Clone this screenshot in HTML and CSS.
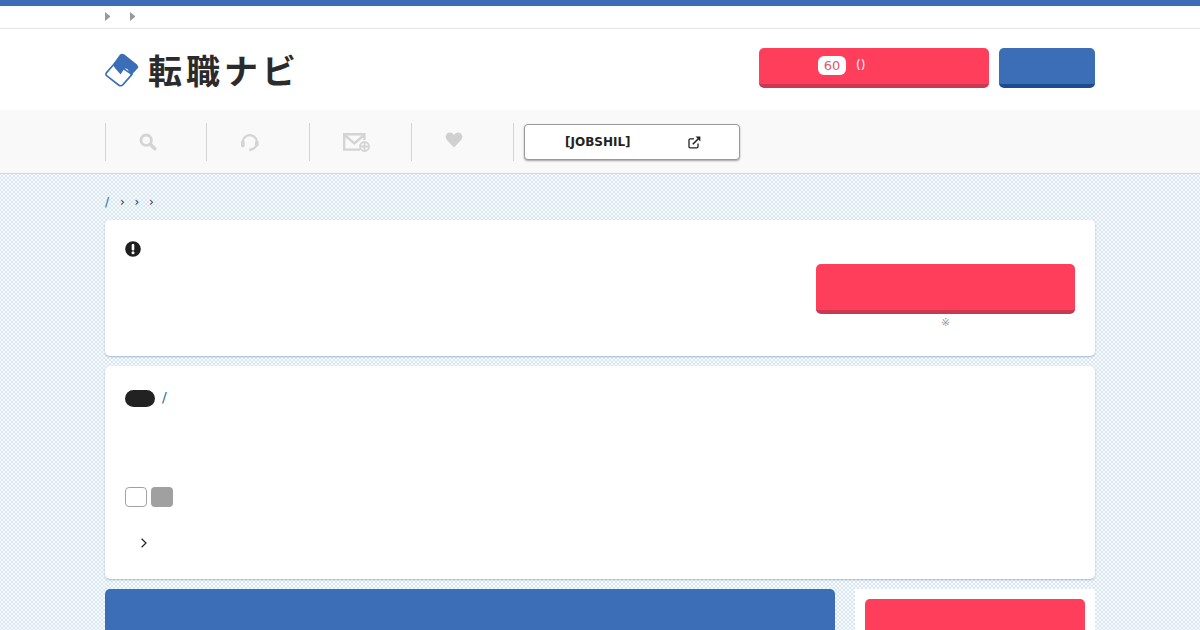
FILE: index.html
```html
<!DOCTYPE html>
<html lang="ja">
<head>
<meta charset="utf-8">
<title>転職ナビ</title>
<link rel="stylesheet" href="styles.css">
</head>
<body>
<div class="topline"></div>
<div class="subnav">
  <div class="wrap subnav-in">
    <span class="tri"></span>
    <span class="tri"></span>
  </div>
</div>
<header class="header">
  <div class="wrap header-in">
    <a class="logo">
      <svg class="logo-mark" width="34" height="34" viewBox="0 0 34 34">
        <path d="M10 10 L1.6 19.6 Q0 21.6 2.2 23.2 L13.6 32 Q16 33.6 18 31.6 L27 21.4 Z" fill="#fff" stroke="#3c6eb8" stroke-width="1.6" stroke-linejoin="round"/>
        <path d="M8.5 10.5 L15 1.5 Q17 0 19.5 1.5 L32 11.5 Q34 13.5 32.5 15.5 L26 22.6 L22.8 16.6 Q21 14.6 19 16 L15.6 21.4 L10.8 16 Q9.4 14.4 8.6 13 Z" fill="#3c6eb8"/>
      </svg>
      <span class="logo-text">転職ナビ</span>
    </a>
    <div class="header-btns">
      <a class="btn btn-red btn-reg"><span class="count">60</span><span class="paren">()</span></a>
      <a class="btn btn-blue btn-login"></a>
    </div>
  </div>
</header>
<nav class="gnav">
  <div class="wrap gnav-in">
    <a class="gitem gitem-1">
      <svg width="18" height="18" viewBox="0 0 18 18"><circle cx="7.2" cy="7.2" r="5.2" fill="none" stroke="#d4d4d4" stroke-width="2.8"/><path d="M11.2 11.2 L15.8 15.8" stroke="#d4d4d4" stroke-width="3.4" stroke-linecap="round"/></svg>
    </a>
    <a class="gitem gitem-2">
      <svg width="20" height="20" viewBox="0 0 20 20"><path d="M2.6 9.6 A7.2 7.2 0 1 1 16.6 12.6 Q15.4 16.4 11 17.6" fill="none" stroke="#d4d4d4" stroke-width="2.2"/><rect x="1" y="8.6" width="3.6" height="6.6" rx="1.4" fill="#d4d4d4"/><rect x="15" y="9" width="3.6" height="5.6" rx="1.4" fill="#d4d4d4"/><circle cx="10.4" cy="17.8" r="1.4" fill="#d4d4d4"/></svg>
    </a>
    <a class="gitem gitem-3">
      <svg width="27" height="19" viewBox="0 0 27 19"><path d="M17 16.6 H1.2 V1.2 H21.4 V7" fill="none" stroke="#d4d4d4" stroke-width="2.4"/><path d="M1.6 2 L11.4 10.4 L21 2" fill="none" stroke="#d4d4d4" stroke-width="2.4"/><circle cx="21.5" cy="13.5" r="4.5" fill="none" stroke="#d4d4d4" stroke-width="1.8"/><path d="M21.5 10 V17 M18 13.5 H25" stroke="#d4d4d4" stroke-width="1.8"/></svg>
    </a>
    <a class="gitem gitem-4">
      <svg width="18" height="16" viewBox="0 0 20 18"><path d="M10 17.4 L2 9 C-1 5.4 1.4 .6 5.4 .6 C7.4 .6 9 1.8 10 3.6 C11 1.8 12.6 .6 14.6 .6 C18.6 .6 21 5.4 18 9 Z" fill="#d0d0d0"/></svg>
    </a>
    <a class="jobshil">
      <span class="jobshil-text">[JOBSHIL]</span>
      <svg class="ext" width="13" height="13" viewBox="0 0 13 13"><path d="M10 7.4 V10.6 Q10 11.8 8.8 11.8 H2.2 Q1 11.8 1 10.6 V4 Q1 2.8 2.2 2.8 H6" fill="none" stroke="#222" stroke-width="1.3"/><path d="M4.8 8.2 L10.8 2.2" stroke="#222" stroke-width="1.6"/><path d="M7.6 .6 H12.4 V5.4 Z" fill="#222"/></svg>
    </a>
  </div>
</nav>
<main class="main">
  <div class="wrap">
    <div class="crumbs"><span class="slash">/</span><span class="chev">›</span><span class="chev">›</span><span class="chev">›</span></div>
    <section class="card card-alert">
      <svg class="alert-icon" width="16" height="16" viewBox="0 0 16 16"><circle cx="8" cy="8" r="7.8" fill="#1e1e1e"/><rect x="6.7" y="3" width="2.6" height="6.6" rx="1" fill="#fff"/><circle cx="8" cy="11.8" r="1.5" fill="#fff"/></svg>
      <div class="alert-action">
        <a class="btn btn-red btn-apply"></a>
        <span class="note">※</span>
      </div>
    </section>
    <section class="card card-job">
      <div class="job-top"><span class="pill"></span><span class="slash slash-job">/</span></div>
      <div class="tags"><span class="tag tag-line"></span><span class="tag tag-fill"></span></div>
      <div class="more">
        <svg width="8" height="10" viewBox="0 0 8 10"><path d="M1.6 .8 L6 5 L1.6 9.2" fill="none" stroke="#222" stroke-width="1.2"/></svg>
      </div>
    </section>
    <div class="bottom">
      <div class="blue-panel"></div>
      <aside class="side"><a class="btn btn-side"></a></aside>
    </div>
  </div>
</main>
</body>
</html>
```
FILE: styles.css
```css
* { box-sizing: border-box; }
html, body { margin: 0; padding: 0; height: 630px; overflow: hidden; }
body { font-family: "DejaVu Sans", "Noto Sans CJK JP", sans-serif; background: #fff; color: #222; }
a { display: block; color: inherit; text-decoration: none; }
.wrap { width: 990px; margin: 0 auto; }

.topline { height: 6px; background: #3c6eb8; }

.subnav { height: 23px; border-bottom: 1px solid #e4e4e4; background: #fff; }
.subnav-in { display: flex; gap: 20px; padding-top: 6px; }
.tri { width: 5px; height: 9px; border-left: 5px solid #999; border-top: 4.5px solid transparent; border-bottom: 4.5px solid transparent; }

.header { height: 81px; background: #fff; }
.header-in { display: flex; justify-content: space-between; align-items: flex-start; padding-top: 19px; }
.logo { display: flex; align-items: center; gap: 9px; height: 46px; }
.logo-mark { display: block; margin-top: -2px; }
.logo-text { font-family: "Noto Sans CJK JP", sans-serif; font-size: 34px; line-height: 46px; font-weight: 700; color: #2b2b2b; letter-spacing: 4px; white-space: nowrap; margin-top: -3px; }
.header-btns { display: flex; gap: 10px; }

.btn { border-radius: 5px; }
.btn-red { background: #ff3e5c; border-bottom: 4px solid #c73a51; }
.btn-blue { background: #3c6eb8; border-bottom: 4px solid #1c4b8f; }
.btn-reg { width: 230px; height: 40px; display: flex; align-items: center; padding-left: 59px; padding-bottom: 2px; color: #fff; font-size: 12px; }
.count { width: 28px; height: 19px; border-radius: 6px; background: #fff; color: #d9596b; font-size: 13px; line-height: 19px; text-align: center; }
.paren { margin-left: 10px; }
.btn-login { width: 96px; height: 40px; }

.gnav { height: 64px; background: #f9f9f9; border-bottom: 1px solid #c5d8e8; }
.gnav-in { display: flex; align-items: flex-start; padding-top: 13px; }
.gitem { height: 38px; border-left: 1px solid #d4d4d4; display: flex; align-items: center; padding-left: 33px; }
.gitem-1 { width: 101px; padding-bottom: 1px; }
.gitem-2 { width: 103px; }
.gitem-3 { width: 102px; }
.gitem-4 { width: 102px; padding-bottom: 4px; }
.jobshil { width: 216px; height: 36px; margin: 1px 0 0 11px; background: #fff; border: 1px solid #999; border-radius: 4px; box-shadow: 0 1px 2px rgba(0,0,0,.35); display: flex; align-items: center; font-size: 12px; font-weight: 700; color: #222; padding-left: 40px; position: relative; }
.jobshil::before { content: ""; position: absolute; left: -12px; top: -2px; height: 38px; border-left: 1px solid #d4d4d4; }
.jobshil-text { width: 123px; }

.main {
  height: 457px;
  overflow: hidden;
  padding-top: 20px;
  background-color: #f7fbfd;
  background-image: radial-gradient(circle, #d9e7f3 .9px, transparent 1.1px), radial-gradient(circle, #d9e7f3 .9px, transparent 1.1px);
  background-size: 4px 4px;
  background-position: 0 0, 2px 2px;
}
.crumbs { display: flex; height: 16px; font-size: 12px; line-height: 16px; color: #333; }
.slash { color: #1d6a94; }
.crumbs .slash { width: 15px; }
.chev { width: 14.5px; }

.card { background: #fff; border-radius: 5px; box-shadow: 0 1px 2px rgba(110,140,165,.55); margin-bottom: 10px; }
.card-alert { height: 136px; margin-top: 10px; padding: 20px 20px 0; position: relative; display: flex; justify-content: space-between; align-items: flex-start; }
.alert-icon { display: block; margin-top: 1px; }
.alert-action { width: 259px; padding-top: 24px; display: flex; flex-direction: column; align-items: center; }
.btn-apply { width: 259px; height: 50px; }
.note { font-size: 11px; line-height: 12px; margin-top: 3px; color: #999; }

.card-job { height: 213px; padding: 23px 20px 0; }
.job-top { display: flex; align-items: center; height: 18px; }
.pill { width: 30px; height: 17px; border-radius: 9px; background: #222; }
.slash-job { margin-left: 7px; font-size: 14px; line-height: 14px; margin-top: -2px; }
.tags { display: flex; gap: 4px; margin-top: 80px; }
.tag { width: 22px; height: 20px; border-radius: 4px; }
.tag-line { border: 1px solid #a2a2a2; background: #fff; }
.tag-fill { background: #a0a0a0; }
.more { margin: 31px 0 0 15px; height: 10px; }
.more svg { display: block; }

.bottom { display: flex; justify-content: space-between; align-items: flex-start; height: 41px; }
.blue-panel { width: 730px; height: 41px; background: #3c6eb8; border-radius: 5px 5px 0 0; }
.side { width: 240px; height: 41px; background: #fff; padding: 10px 10px 0; }
.btn-side { width: 220px; height: 31px; background: #ff3e5c; border-radius: 5px 5px 0 0; }
```
